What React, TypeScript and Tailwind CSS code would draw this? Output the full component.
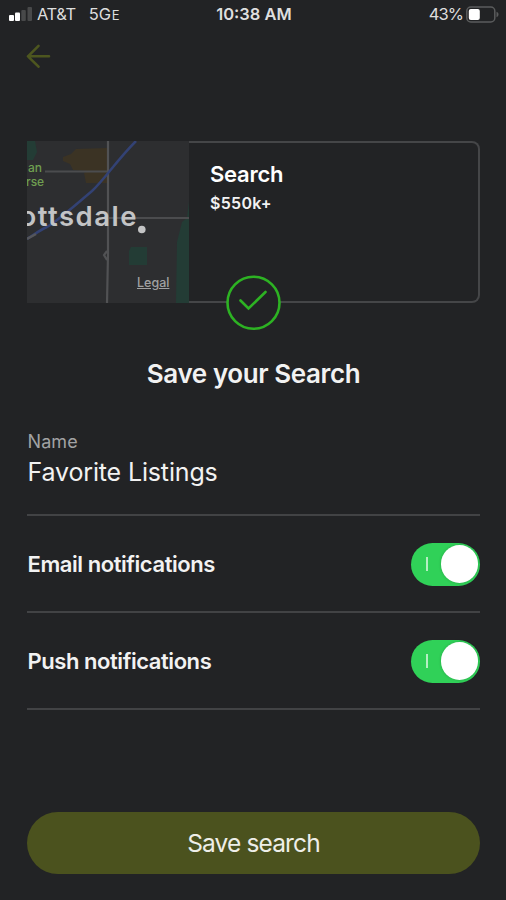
import React from 'react';

const notifications = [
  { label: 'Email notifications' },
  { label: 'Push notifications' }
];

const StatusBar = () => (
  <div className="grid h-[29px] grid-cols-[1fr_auto_1fr] items-center pl-[9px] pr-[7px] text-[16.5px] text-[#dedede]">
    <div className="flex items-center">
      <svg width="24" height="15" viewBox="0 0 24 15">
        <rect x="0" y="8" width="5" height="6" rx="1" fill="#fff" />
        <rect x="6" y="5.5" width="5" height="8.5" rx="1" fill="#fff" />
        <rect x="12.3" y="3" width="4.5" height="11" rx="1" fill="#48494a" />
        <rect x="18.5" y="0" width="4.5" height="14" rx="1" fill="#48494a" />
      </svg>
      <span className="ml-[4px] tracking-[-0.4px]">AT&amp;T</span>
      <span className="ml-[13px] tracking-[-0.2px]">5G<span className="ml-px text-[13px]">E</span></span>
    </div>
    <span className="font-semibold">10:38 AM</span>
    <div className="flex items-center justify-end">
      <span className="tracking-[-0.9px]">43%</span>
      <svg className="ml-[3px]" width="33" height="17" viewBox="0 0 33 17">
        <rect x="0.8" y="1" width="28" height="15" rx="4" fill="none" stroke="#5b5c5d" strokeWidth="1.5" />
        <rect x="2.8" y="3" width="11" height="11" rx="2" fill="#fff" />
        <path d="M30.5 5.8c1.4.5 2 1.5 2 2.7s-.6 2.2-2 2.7z" fill="#5b5c5d" />
      </svg>
    </div>
  </div>
);

const MapPreview = () => (
  <div className="relative h-[162px] w-[162px] shrink-0 overflow-hidden bg-[#2d2e30]">
    <svg width="162" height="162" viewBox="0 0 162 162" fill="none">
      <path d="M0 0h8l2 11-4 8H0z" fill="#233c35" />
      <path d="M36 16l8-3 5-5 31-1v35H59l-2-10 4-2-15-1-3-6-7-3z" fill="#3b3324" />
      <path d="M162 60v102h-13l1-61 5-20 5-4z" fill="#233c35" />
      <path d="M104 106h16v18h-18v-14z" fill="#233c35" />
      <path d="M18 30.5h62M81 77h81" stroke="#4b4c4e" strokeWidth="2" />
      <path d="M81 0v113l-1 49M80 110l-3 4 3 5" stroke="#515254" strokeWidth="2.2" />
      <path d="M0 98C8 93 13 89 20 86C33 78 46 66 65 50C77 39 90 19 109 0" stroke="#334274" strokeWidth="2.5" />
      <path d="M0 98l9-5" stroke="#55565a" strokeWidth="2.5" />
      <circle cx="114.8" cy="88.5" r="3.8" fill="#c3c4c5" />
    </svg>
    <span className="absolute left-[1px] top-[20px] text-[12px] font-medium leading-[13.5px] text-[#6f9f51]">an</span>
    <span className="absolute left-[-1px] top-[33.5px] text-[12px] font-medium leading-[13.5px] text-[#6f9f51]">rse</span>
    <span className="absolute right-[51px] top-[59px] text-[27.5px] font-semibold leading-[32px] tracking-[1.5px] text-[#c3c4c5]">ottsdale</span>
    <span className="absolute left-[110px] top-[134px] text-[12.5px] font-medium leading-[16px] text-[#a0a1a2] underline">Legal</span>
  </div>
);

const Toggle = () => (
  <div className="flex h-[43px] w-[69.5px] items-center rounded-full bg-[#30d158] pl-[15px] pr-[2px]">
    <div className="h-[14px] w-[2px] bg-[#b5efc3]" />
    <div className="ml-auto h-[37.5px] w-[37.5px] rounded-full bg-white shadow-[0_0_3px_rgba(0,0,0,0.2)]" />
  </div>
);

const App = () => {
  return (
    <div className="flex h-[900px] w-[506px] flex-col overflow-hidden bg-[#222325] font-['Inter',sans-serif] text-[#f2f2f2]">
      <StatusBar />

      {/* Back */}
      <div className="flex h-[54px] items-center pl-[26px]">
        <svg width="25" height="24" viewBox="0 0 25 24" fill="none" stroke="#4d561f" strokeWidth="2.6" strokeLinecap="round" strokeLinejoin="round">
          <path d="M23 12.3H2M12.5 1.8L2 12.3l10.5 10.4" />
        </svg>
      </div>

      <div className="flex grow flex-col pl-[27px] pr-[26px] pt-[58px]">
        {/* Search card */}
        <div className="relative flex h-[162px]">
          <MapPreview />
          <div className="grow rounded-r-[8px] border-2 border-l-0 border-[#454648] pl-[21px] pt-[17px]">
            <h2 className="text-[22px] font-semibold leading-[28px] tracking-[-0.25px] text-white">Search</h2>
            <p className="mt-[5px] text-[16px] font-semibold leading-[20px] tracking-[0.3px]">$550k+</p>
          </div>
          <svg className="absolute left-[199px] top-[134px]" width="56" height="56" viewBox="0 0 56 56" fill="none" stroke="#2db223" strokeWidth="2.6" strokeLinecap="round">
            <circle cx="27.5" cy="27.8" r="26" fill="#222325" />
            <path d="M14.5 25.5l8 8L39.5 17" />
          </svg>
        </div>

        <h1 className="mt-[55px] text-center text-[26px] font-semibold leading-[32px] tracking-[-0.4px]">Save your Search</h1>

        <div className="mt-[40px] flex h-[86px] flex-col border-b-2 border-[#424345] pl-[0.5px]">
          <span className="text-[18px] leading-[24px] tracking-[0.1px] text-[#a1a2a3]">Name</span>
          <span className="mt-px text-[25px] leading-[34px] tracking-[-0.15px]">Favorite Listings</span>
        </div>

        {notifications.map((item) => (
          <div key={item.label} className="flex h-[97px] items-center justify-between border-b-2 border-[#424345] pt-px first-of-type:pt-0">
            <span className="pl-[0.5px] text-[22px] font-semibold tracking-[-0.44px]">{item.label}</span>
            <Toggle />
          </div>
        ))}

        <button className="mb-[26px] mt-auto h-[62px] rounded-full bg-[#4b521e] pt-px text-[24.5px] tracking-[-0.85px] text-[#eeeee8]">
          Save search
        </button>
      </div>
    </div>
  );
};

export default App;
